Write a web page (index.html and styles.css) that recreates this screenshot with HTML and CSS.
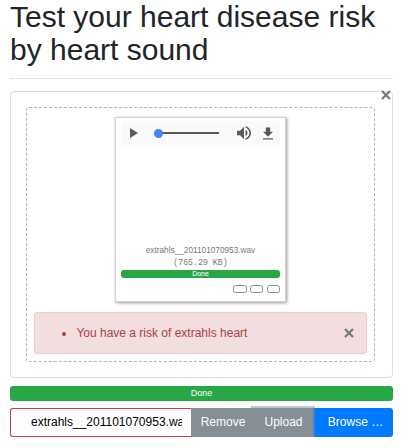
FILE: index.html
```
<!DOCTYPE html>
<html lang="en">
<head>
<meta charset="utf-8">
<title>Heart sound test</title>
<link rel="stylesheet" href="styles.css">
</head>
<body>
<main class="page">
  <h1>Test your heart disease risk<br>by heart sound</h1>
  <div class="rule"></div>
  <section class="preview">
    <button class="close close-preview" aria-label="Close"><svg viewBox="0 0 10 10"><path d="M1 1 9 9M9 1 1 9"/></svg></button>
    <div class="dropzone">
      <div class="frame">
        <div class="audio">
          <svg class="play" viewBox="0 0 8 10"><path d="M0 0v10l8-5z"/></svg>
          <div class="track"><span class="thumb"></span></div>
          <svg class="volume" viewBox="3 3 18 18"><path d="M3 9v6h4l5 5V4L7 9H3zm13.5 3c0-1.77-1.02-3.29-2.5-4.03v8.05c1.48-.73 2.5-2.25 2.5-4.02zM14 3.23v2.06c2.89.86 5 3.54 5 6.71s-2.11 5.85-5 6.71v2.06c4.01-.91 7-4.49 7-8.77s-2.99-7.86-7-8.77z"/></svg>
          <svg class="download" viewBox="5 3 14 17"><path d="M19 9h-4V3H9v6H5l7 7 7-7zM5 18v2h14v-2H5z"/></svg>
        </div>
        <div class="caption">extrahls__201101070953.wav</div>
        <div class="size">(765.29 KB)</div>
        <div class="progress progress-small">Done</div>
        <div class="actions"><button></button><button></button><button></button></div>
      </div>
      <div class="alert">
        <ul><li>You have a risk of extrahls heart</li></ul>
        <button class="close" aria-label="Close"><svg viewBox="0 0 10 10"><path d="M1 1 9 9M9 1 1 9"/></svg></button>
      </div>
    </div>
  </section>
  <div class="progress">Done</div>
  <div class="input-group">
    <div class="filename"><span>extrahls__201101070953.wav</span></div>
    <button class="btn remove">Remove</button>
    <button class="btn upload">Upload</button>
    <button class="btn browse">Browse …</button>
  </div>
</main>
</body>
</html>
```
FILE: styles.css
```
* { box-sizing: border-box; }
body {
  margin: 0;
  background: #fff;
  color: #212529;
  font: 12px/18px "Liberation Sans", Arial, sans-serif;
}
button { margin: 0; padding: 0; border: 0; background: none; font: inherit; }
.page { width: 383px; margin-left: 10px; }
h1 {
  margin: 0;
  height: 78px;
  font-size: 30px;
  font-weight: 400;
  line-height: 33px;
  white-space: nowrap;
}
.rule { height: 1px; background: #e5e5e5; }
.preview {
  position: relative;
  height: 287px;
  margin-top: 12px;
  padding: 15px 17px 15px 15px;
  border: 1px solid #ddd;
  border-radius: 4px;
}
.dropzone {
  height: 255px;
  padding: 9px 7px 7px;
  border: 1px dashed #b4b4b4;
  border-radius: 3px;
}
.close { display: block; width: 10px; height: 10px; }
.close svg { display: block; width: 100%; height: 100%; }
.close path { fill: none; stroke: #777; stroke-width: 2.2; }
.close-preview { position: absolute; top: -2px; right: 1px; }
.frame {
  width: 171px;
  height: 185px;
  margin-left: 81px;
  padding: 3px 5px 0;
  border: 1px solid #d5d5d5;
  box-shadow: 1px 1px 3px 0 #a2958a;
}
.audio {
  display: flex;
  align-items: center;
  height: 24px;
  padding: 0 7px 0 9px;
  background: #fafafa;
}
.audio svg { display: block; fill: #5a5a5a; }
.play { width: 8px; height: 10px; }
.track {
  position: relative;
  width: 61px;
  height: 2px;
  margin-left: 20px;
  background: #5a5a5a;
}
.thumb {
  position: absolute;
  top: -3px;
  left: -4px;
  width: 9px;
  height: 9px;
  border-radius: 50%;
  background: #4285f4;
}
.volume { width: 14px; height: 14px; margin-left: auto; }
.download { width: 10px; height: 13px; margin-left: 12px; }
.caption {
  margin-top: 100px;
  color: #777;
  font-size: 8.25px;
  line-height: 12px;
  text-align: center;
}
.size {
  height: 13px;
  color: #777;
  font: 8.25px/11px "Liberation Mono", monospace;
  text-align: center;
}
.progress {
  height: 15px;
  margin-top: 8px;
  border-radius: 3px;
  background: #28a745;
  color: #fff;
  font-size: 9px;
  line-height: 15px;
  text-align: center;
}
.progress-small { height: 8px; margin-top: 0; font-size: 7px; line-height: 8px; }
.actions { display: flex; justify-content: flex-end; gap: 4px; margin-top: 7px; }
.actions button { width: 13px; height: 8px; border: 1px solid #868e96; border-radius: 2.5px; }
.actions button:first-child { width: 14px; margin-right: -1px; }
.alert {
  display: flex;
  align-items: center;
  justify-content: space-between;
  height: 42px;
  margin-top: 10px;
  padding: 0 12px 0 11px;
  border: 1px solid #ebccd1;
  border-radius: 3px;
  background: #f2dede;
  color: #a94442;
}
.alert ul { margin: 0; padding-left: 30.4px; }
.input-group { display: flex; height: 29px; margin-top: 7px; }
.filename {
  width: 181px;
  padding: 0 9px 0 20px;
  border: 1px solid #dc3545;
  border-right: 0;
  border-radius: 3px 0 0 3px;
  color: #000;
  line-height: 27px;
}
.filename span { display: block; overflow: hidden; white-space: nowrap; }
.btn { color: #fff; line-height: 29px; }
.remove { width: 62px; padding-left: 2px; background: #868e96; }
.upload {
  position: relative;
  z-index: 1;
  width: 60px;
  padding-left: 1px;
  background: #868e96;
  box-shadow: 0 0 0 2px rgba(134, 142, 150, .5);
}
.browse { width: 80px; padding-left: 5px; border-radius: 0 3px 3px 0; background: #007bff; }
```
